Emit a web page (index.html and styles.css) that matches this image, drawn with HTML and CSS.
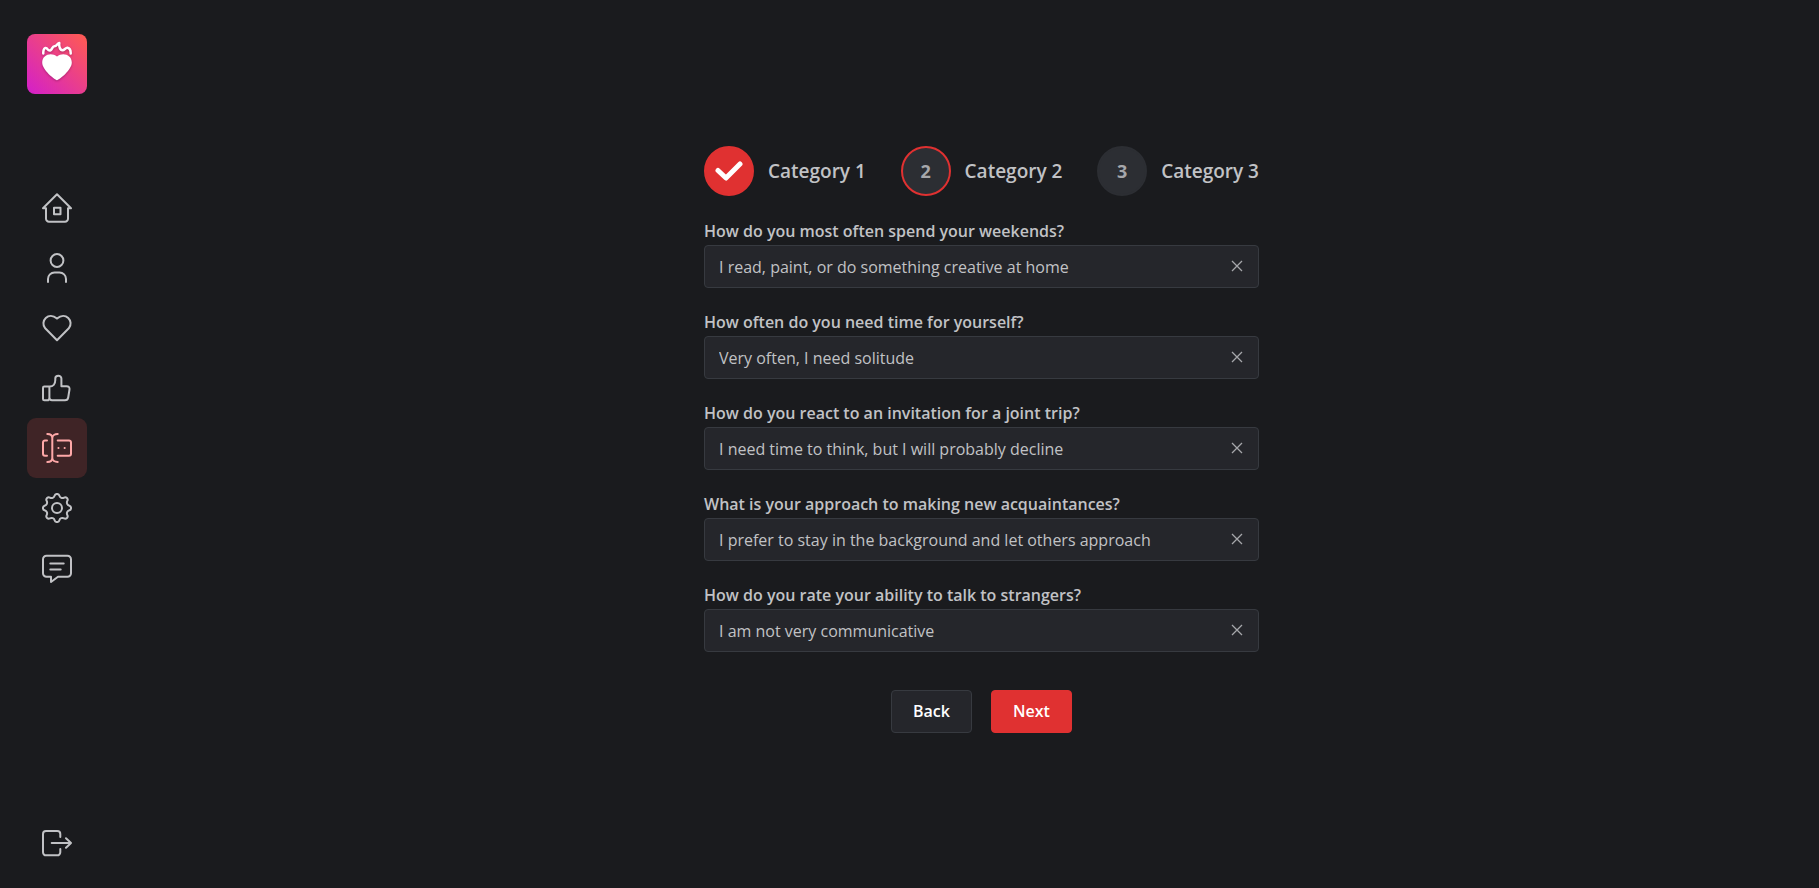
FILE: index.html
```html
<!DOCTYPE html>
<html lang="en">
<head>
<meta charset="utf-8">
<title>Questionnaire</title>
<link rel="stylesheet" href="styles.css">
</head>
<body>
<div class="app">
  <aside class="sidebar">
    <a class="logo" href="#" aria-label="Start page">
      <svg viewBox="0 0 60 60" aria-hidden="true">
        <defs>
          <linearGradient id="logo-fill" x1="0" y1="1" x2="1" y2="0">
            <stop offset="0" stop-color="#d31fcb"/>
            <stop offset="1" stop-color="#ff5c50"/>
          </linearGradient>
        </defs>
        <rect width="60" height="60" rx="8" fill="url(#logo-fill)"/>
        <g class="logo-mark">
          <path d="M30 46.300C27.500 45.500 15.200 36 15.200 28.500C15.200 20.500 24.500 17.800 30 22.600C35.500 17.800 44.800 20.500 44.800 28.500C44.800 36 32.500 45.500 30 46.300Z" fill="#fff"/>
          <path d="M16.300 19.500C16 15 18 13 19.700 14.300C21 15.800 21.800 17 23.500 16.300C25.500 15.300 25.300 12 27.500 12.300C30 12.300 29.800 9.500 32.300 9C31.800 12 33 16.300 35.500 16.300C37.500 16.300 38.500 13.500 40.500 13.800C43 14.300 43.800 16 43.700 19.500" fill="none" stroke="#fff" stroke-width="2.500" stroke-linecap="round" stroke-linejoin="round"/>
        </g>
      </svg>
    </a>
    <nav class="menu" aria-label="Main">
      <a class="menu-item" href="#" aria-label="Home"><svg class="icon" viewBox="0 0 30 30"><path d="M4 15.300H1L15 1.200L29 15.300H26M4 15.300V25.700a3 3 0 0 0 3 3H23a3 3 0 0 0 3-3V15.300M12 14.800h6.500v6.500h-6.500z"/></svg></a>
      <a class="menu-item" href="#" aria-label="Profile"><svg class="icon" viewBox="0 0 30 30"><circle cx="15" cy="7.500" r="6.400"/><path d="M6 29V26a6.500 6.500 0 0 1 6.500-6.500h5A6.500 6.500 0 0 1 24 26v3"/></svg></a>
      <a class="menu-item" href="#" aria-label="Matches"><svg class="icon" viewBox="0 0 30 30"><path d="M15 27.300L3.200 15.300C-2.500 8.500 6.500-2 15 5.600C23.500-2 32.500 8.500 26.800 15.300Z"/></svg></a>
      <a class="menu-item" href="#" aria-label="Likes"><svg class="icon" viewBox="0 0 30 30"><path d="M7.700 13.500H2.300a1.300 1.300 0 0 0-1.300 1.300V25.900a1.300 1.300 0 0 0 1.300 1.300H6.400M7.700 13.500C11 13.500 13.300 11 13.300 7V5.500C13.300 1.800 19.400 1.800 19.400 5.500V13.300H24.500C26.800 13.300 27.800 14.500 27.500 16.500L26.200 24.500C25.900 26.500 25 27.200 23 27.200H10A2.600 2.600 0 0 1 7.400 24.600V13.500M7.400 24.600C7.400 26.200 6.900 27.200 5.700 27.200"/></svg></a>
      <a class="menu-item menu-item-active" href="#" aria-label="Questionnaire" aria-current="page"><svg class="icon" viewBox="0 0 30 30"><path d="M5.300 1C8 1 10.300 2.300 10.300 5V25C10.300 27.700 8 29 5.300 29M15.700 1C13 1 10.300 2.300 10.300 5M10.300 25C10.300 27.700 13 29 15.700 29M5 7.400H3a2 2 0 0 0-2 2V20.700a2 2 0 0 0 2 2H5M15.700 7.400H27a2 2 0 0 1 2 2V20.700a2 2 0 0 1-2 2H15.700M16.400 15h.1M22.600 15h.1"/></svg></a>
      <a class="menu-item" href="#" aria-label="Settings"><svg class="icon" viewBox="-15 -15 30 30"><circle r="5"/><path d="M-2.300-12.400C-1.700-14.600 1.700-14.600 2.300-12.400C2.900-10.200 5.160-9.260 7.140-10.390C9.120-11.530 11.530-9.120 10.390-7.140C9.260-5.160 10.200-2.900 12.400-2.300C14.600-1.700 14.600 1.700 12.400 2.300C10.200 2.900 9.260 5.160 10.390 7.140C11.530 9.120 9.120 11.530 7.140 10.390C5.160 9.260 2.900 10.200 2.300 12.400C1.700 14.600-1.700 14.600-2.300 12.400C-2.900 10.200-5.160 9.260-7.140 10.390C-9.120 11.530-11.530 9.120-10.390 7.140C-9.260 5.160-10.200 2.900-12.400 2.300C-14.600 1.700-14.600-1.700-12.400-2.300C-10.200-2.900-9.260-5.160-10.390-7.140C-11.530-9.120-9.120-11.530-7.140-10.390C-5.160-9.260-2.900-10.200-2.300-12.400Z"/></svg></a>
      <a class="menu-item" href="#" aria-label="Messages"><svg class="icon" viewBox="0 0 30 30"><path d="M4.500 2.800H25.500A3.500 3.500 0 0 1 29 6.300V20.300a3.500 3.500 0 0 1-3.500 3.500H16L9 29V23.800H4.500A3.500 3.500 0 0 1 1 20.300V6.300A3.500 3.500 0 0 1 4.500 2.800ZM8.300 10.500H21.700M8.300 16.500H18.700"/></svg></a>
    </nav>
    <button class="menu-item" type="button" aria-label="Log out"><svg class="icon" viewBox="0 0 30 30"><path d="M18.300 9V6a3 3 0 0 0-3-3H4A3 3 0 0 0 1 6V24.300a3 3 0 0 0 3 3H15.300a3 3 0 0 0 3-3V21M9.700 15H29M24 10.300L29 15L24 19.700"/></svg></button>
  </aside>
  <main class="content">
    <form class="survey">
      <ol class="steps">
        <li class="step"><span class="step-mark step-done"><svg class="check" viewBox="0 0 28 20" aria-label="Completed"><path d="M3 9.500L11 17L25 3"/></svg></span>Category 1</li>
        <li class="step" aria-current="step"><span class="step-mark step-current">2</span>Category 2</li>
        <li class="step"><span class="step-mark">3</span>Category 3</li>
      </ol>
      <div class="question">
        <label for="q1">How do you most often spend your weekends?</label>
        <div class="field"><input id="q1" type="text" readonly value="I read, paint, or do something creative at home"><button class="clear" type="button" aria-label="Clear"><svg viewBox="0 0 12 12"><path d="M1 1L11 11M11 1L1 11"/></svg></button></div>
      </div>
      <div class="question">
        <label for="q2">How often do you need time for yourself?</label>
        <div class="field"><input id="q2" type="text" readonly value="Very often, I need solitude"><button class="clear" type="button" aria-label="Clear"><svg viewBox="0 0 12 12"><path d="M1 1L11 11M11 1L1 11"/></svg></button></div>
      </div>
      <div class="question">
        <label for="q3">How do you react to an invitation for a joint trip?</label>
        <div class="field"><input id="q3" type="text" readonly value="I need time to think, but I will probably decline"><button class="clear" type="button" aria-label="Clear"><svg viewBox="0 0 12 12"><path d="M1 1L11 11M11 1L1 11"/></svg></button></div>
      </div>
      <div class="question">
        <label for="q4">What is your approach to making new acquaintances?</label>
        <div class="field"><input id="q4" type="text" readonly value="I prefer to stay in the background and let others approach"><button class="clear" type="button" aria-label="Clear"><svg viewBox="0 0 12 12"><path d="M1 1L11 11M11 1L1 11"/></svg></button></div>
      </div>
      <div class="question">
        <label for="q5">How do you rate your ability to talk to strangers?</label>
        <div class="field"><input id="q5" type="text" readonly value="I am not very communicative"><button class="clear" type="button" aria-label="Clear"><svg viewBox="0 0 12 12"><path d="M1 1L11 11M11 1L1 11"/></svg></button></div>
      </div>
      <div class="actions">
        <button class="button" type="button">Back</button>
        <button class="button button-primary" type="submit">Next</button>
      </div>
    </form>
  </main>
</div>
</body>
</html>
```
FILE: styles.css
```css
* { box-sizing: border-box; }

body {
  margin: 0;
  background: #1a1b1e;
  color: #c1c2c5;
  font: 16px/24px "Segoe UI", "Open Sans", "Noto Sans", sans-serif;
}

button, input { font: inherit; color: inherit; }
button { cursor: pointer; }

.app { display: flex; min-height: 100vh; }

.sidebar {
  display: flex;
  flex-direction: column;
  padding: 34px 27px 15px;
}

.logo, .logo svg { display: block; width: 60px; height: 60px; }
.logo-mark { filter: drop-shadow(0 1px 1px rgba(90, 0, 60, 0.4)); }

.menu { margin: 84px 0 auto; }

.menu-item {
  display: flex;
  align-items: center;
  justify-content: center;
  width: 60px;
  height: 60px;
  padding: 0;
  border: 0;
  border-radius: 9px;
  background: none;
  color: #c1c2c5;
}
.menu-item-active { background: #3f2426; color: #ffa8a8; }

.icon {
  width: 30px;
  height: 30px;
  fill: none;
  stroke: currentColor;
  stroke-width: 2;
  stroke-linecap: round;
  stroke-linejoin: round;
}

.content {
  flex: 1;
  display: flex;
  align-items: center;
  justify-content: center;
  padding: 0 0 10px 30px;
}

.survey { width: 555px; }

.steps {
  display: flex;
  justify-content: space-between;
  margin: 0 0 23px;
  padding: 0;
  list-style: none;
}
.step {
  display: flex;
  align-items: center;
  gap: 14px;
  font-size: 19px;
  font-weight: 600;
}
.step-mark {
  display: flex;
  align-items: center;
  justify-content: center;
  width: 50px;
  height: 50px;
  border: 2px solid #2c2e33;
  border-radius: 50%;
  background: #2c2e33;
  color: #a6a7ab;
  font-size: 18px;
  font-weight: 700;
}
.step-current { border-color: #e03131; }
.step-done { border-color: #e03131; background: #e03131; }
.check {
  width: 28px;
  height: 20px;
  fill: none;
  stroke: #fff;
  stroke-width: 5;
  stroke-linecap: round;
  stroke-linejoin: round;
}

.question { margin-bottom: 22px; }
.question label { display: block; height: 26px; font-weight: 600; }

.field {
  display: flex;
  height: 43px;
  border: 1px solid #373a40;
  border-radius: 4px;
  background: #25262b;
}
.field input {
  flex: 1;
  min-width: 0;
  padding: 2px 0 0 14px;
  border: 0;
  outline: 0;
  background: none;
}
.clear {
  display: flex;
  align-items: center;
  justify-content: center;
  width: 42px;
  padding: 0;
  border: 0;
  background: none;
}
.clear svg { width: 12px; height: 12px; fill: none; stroke: #a6a7ab; stroke-width: 1.3; }

.actions {
  display: flex;
  justify-content: center;
  gap: 19px;
  padding-top: 16px;
}
.button {
  width: 81px;
  height: 43px;
  padding: 0;
  border: 1px solid #373a40;
  border-radius: 4px;
  background: #25262b;
  color: #fff;
  font-weight: 600;
}
.button-primary { border-color: #e03131; background: #e03131; }
```
